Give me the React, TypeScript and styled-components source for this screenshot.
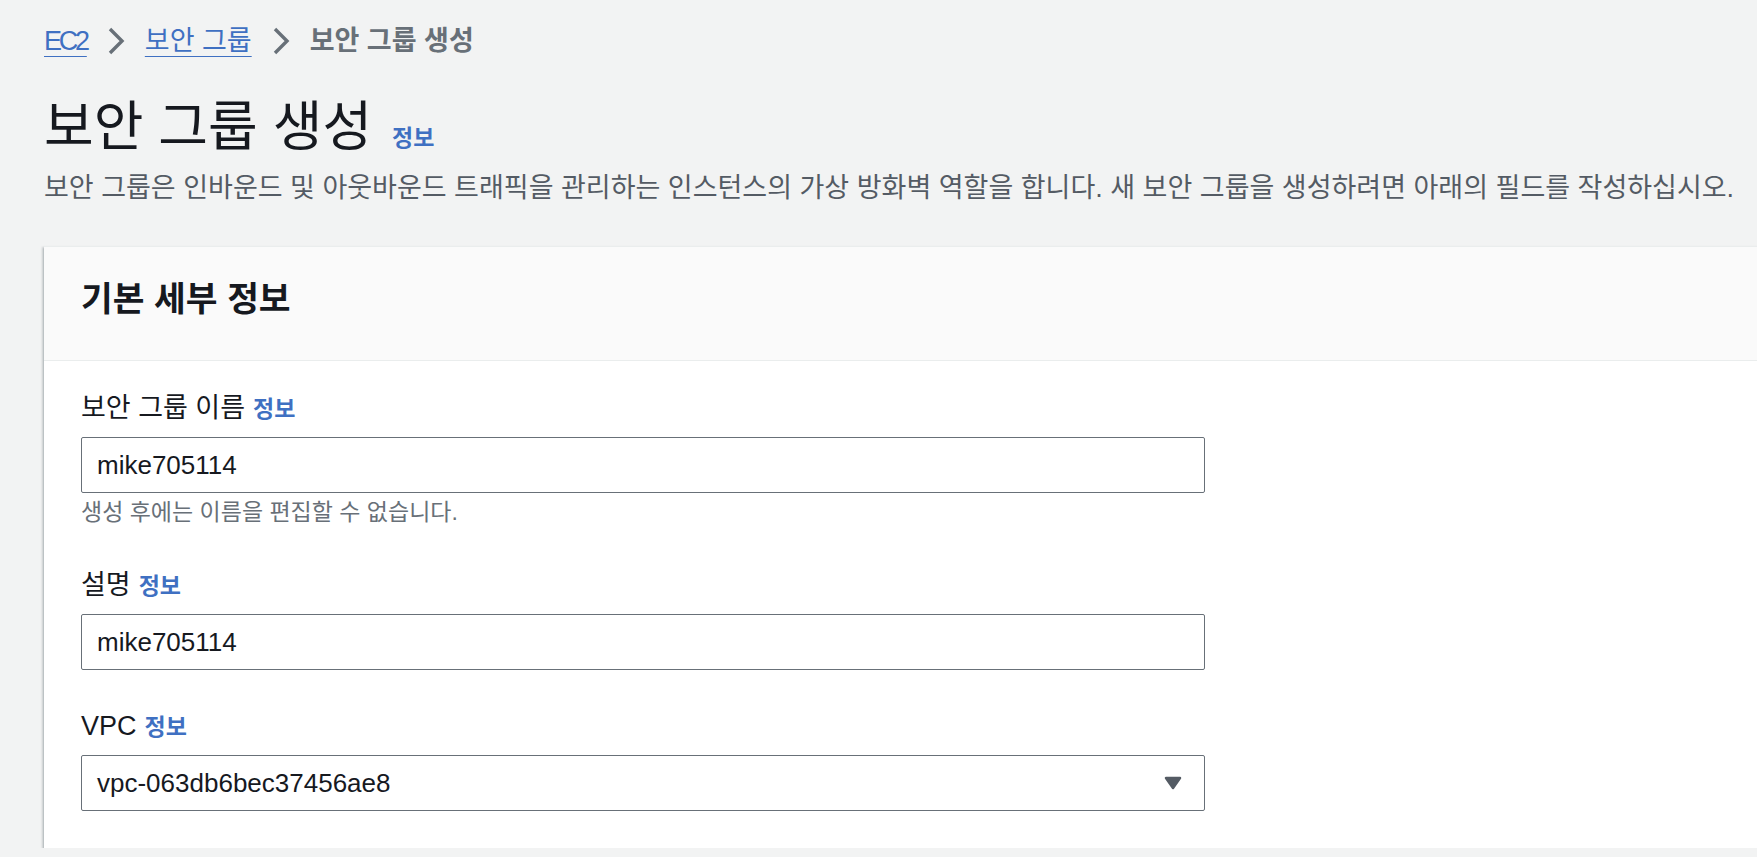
import React from "react";
import styled, { createGlobalStyle } from "styled-components";

const GlobalStyle = createGlobalStyle`
  html, body {
    margin: 0;
    padding: 0;
    background: #f2f3f3;
    overflow: hidden;
  }
  body {
    font-family: "Liberation Sans", "Noto Sans CJK KR", Arial, sans-serif;
    color: #16191f;
  }
  * { box-sizing: border-box; }
`;

const Page = styled.main`
  width: 1800px;
  padding: 23px 0 0 44px;
`;

const Breadcrumbs = styled.nav`
  display: flex;
  align-items: center;
  gap: 20px;
  height: 36px;
  font-size: 27px;
  line-height: 36px;
`;

const CrumbLink = styled.a<{ $condensed?: boolean }>`
  color: #3f70c2;
  text-decoration: underline;
  text-decoration-thickness: 1px;
  text-underline-offset: 6px;
  letter-spacing: ${(p) => (p.$condensed ? "-0.12em" : "normal")};
  cursor: pointer;
`;

const CrumbCurrent = styled.span`
  color: #687078;
  font-weight: 700;
`;

const ChevronIcon = styled.svg`
  display: block;
  flex: none;
`;

const TitleRow = styled.div`
  display: flex;
  align-items: baseline;
  gap: 20px;
  margin-top: 36px;
`;

const Title = styled.h1`
  margin: 0;
  font-size: 54px;
  line-height: 64px;
  font-weight: 400;
  color: #16191f;
`;

const InfoLink = styled.a`
  color: #3f70c2;
  font-size: 23px;
  line-height: 1;
  font-weight: 700;
  text-decoration: none;
  cursor: pointer;
`;

const Description = styled.p`
  margin: 11px 0 0;
  font-size: 27px;
  line-height: 36px;
  color: #545b64;
  white-space: nowrap;
`;

const Card = styled.section`
  margin-top: 40px;
  background: #ffffff;
  border-top: 1px solid #eaeded;
  box-shadow: 0 2px 2px rgba(0, 28, 36, 0.3), -2px 1px 2px rgba(0, 28, 36, 0.15);
`;

const CardHeader = styled.header`
  background: #fafafa;
  padding: 30px 37px 39px;
  border-bottom: 1px solid #eaeded;
`;

const CardTitle = styled.h2`
  margin: 0;
  font-size: 34.5px;
  line-height: 44px;
  font-weight: 700;
  color: #16191f;
`;

const CardBody = styled.div`
  display: flex;
  flex-direction: column;
  gap: 38px;
  padding: 29px 37px 37px;
`;

const Field = styled.div`
  display: flex;
  flex-direction: column;
`;

const LabelRow = styled.label`
  display: flex;
  align-items: baseline;
  gap: 8px;
  height: 37px;
  font-size: 27px;
  line-height: 37px;
  color: #16191f;
`;

const TextInput = styled.input`
  margin-top: 10px;
  width: 1124px;
  height: 56px;
  padding: 0 15px;
  border: 1px solid #687078;
  border-radius: 2px;
  background: #ffffff;
  font-family: "Liberation Sans", "Noto Sans CJK KR", Arial, sans-serif;
  font-size: 26px;
  color: #16191f;
  outline: none;
`;

const Hint = styled.div`
  margin: 4px 0 2px;
  font-size: 23px;
  line-height: 30px;
  color: #687078;
`;

const SelectBox = styled.div`
  margin-top: 10px;
  width: 1124px;
  height: 56px;
  padding: 0 22px 0 15px;
  border: 1px solid #687078;
  border-radius: 2px;
  background: #ffffff;
  display: flex;
  align-items: center;
  justify-content: space-between;
  font-size: 26px;
  color: #16191f;
  cursor: pointer;
`;

const Chevron = () => (
  <ChevronIcon width="18" height="28" viewBox="0 0 18 28" aria-hidden="true">
    <polyline
      points="3,2 15,14 3,26"
      fill="none"
      stroke="#687078"
      strokeWidth="3.4"
      strokeLinejoin="miter"
    />
  </ChevronIcon>
);

const Caret = () => (
  <svg width="18" height="14" viewBox="0 0 18 14" aria-hidden="true">
    <path
      d="M2 2 H16 L9 12 Z"
      fill="#545b64"
      stroke="#545b64"
      strokeWidth="2.5"
      strokeLinejoin="round"
    />
  </svg>
);

export default function App() {
  return (
    <>
      <GlobalStyle />
      <Page>
        <Breadcrumbs aria-label="Breadcrumbs">
          <CrumbLink $condensed>EC2</CrumbLink>
          <Chevron />
          <CrumbLink>보안 그룹</CrumbLink>
          <Chevron />
          <CrumbCurrent>보안 그룹 생성</CrumbCurrent>
        </Breadcrumbs>

        <TitleRow>
          <Title>보안 그룹 생성</Title>
          <InfoLink>정보</InfoLink>
        </TitleRow>
        <Description>
          보안 그룹은 인바운드 및 아웃바운드 트래픽을 관리하는 인스턴스의 가상 방화벽 역할을 합니다. 새 보안 그룹을 생성하려면 아래의 필드를 작성하십시오.
        </Description>

        <Card>
          <CardHeader>
            <CardTitle>기본 세부 정보</CardTitle>
          </CardHeader>
          <CardBody>
            <Field>
              <LabelRow>
                보안 그룹 이름 <InfoLink>정보</InfoLink>
              </LabelRow>
              <TextInput readOnly value="mike705114" />
              <Hint>생성 후에는 이름을 편집할 수 없습니다.</Hint>
            </Field>
            <Field>
              <LabelRow>
                설명 <InfoLink>정보</InfoLink>
              </LabelRow>
              <TextInput readOnly value="mike705114" />
            </Field>
            <Field>
              <LabelRow>
                VPC <InfoLink>정보</InfoLink>
              </LabelRow>
              <SelectBox role="combobox">
                <span>vpc-063db6bec37456ae8</span>
                <Caret />
              </SelectBox>
            </Field>
          </CardBody>
        </Card>
      </Page>
    </>
  );
}
